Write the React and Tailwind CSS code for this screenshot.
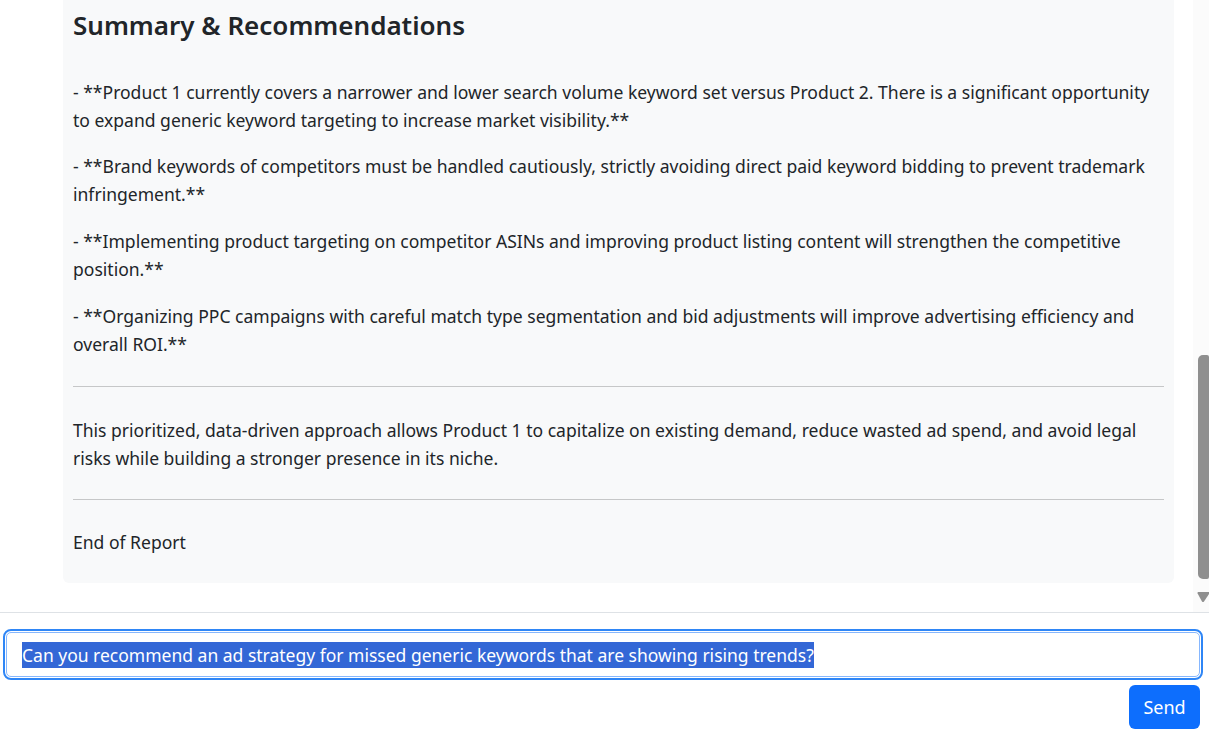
export default function App() {
  const font = { fontFamily: '"Noto Sans", "Open Sans", Arial, sans-serif' };
  return (
    <div className="w-[1209px] h-[738px] flex flex-col bg-white overflow-hidden text-[#212529]" style={font}>
      <div className="flex h-[612px] min-h-0">
        <div className="flex-1 pl-[63px] pr-[19px]">
          <div className="bg-[#f8f9fa] rounded-b-md px-[10px] pb-[27px]">
            <h3 className="text-[26px] font-semibold leading-[34px] pt-[8px] mb-[36px]">Summary &amp; Recommendations</h3>
            <div className="text-[17.55px] leading-[28px] whitespace-nowrap">
              <p className="mb-[18px]">- **Product 1 currently covers a narrower and lower search volume keyword set versus Product 2. There is a significant opportunity<br />to expand generic keyword targeting to increase market visibility.**</p>
              <p className="mb-[19px]">- **Brand keywords of competitors must be handled cautiously, strictly avoiding direct paid keyword bidding to prevent trademark<br />infringement.**</p>
              <p className="mb-[19px]">- **Implementing product targeting on competitor ASINs and improving product listing content will strengthen the competitive<br />position.**</p>
              <p>- **Organizing PPC campaigns with careful match type segmentation and bid adjustments will improve advertising efficiency and<br />overall ROI.**</p>
              <hr className="mt-[28px] mb-[29px] border-0 border-t border-[#c6c7c8]" />
              <p>This prioritized, data-driven approach allows Product 1 to capitalize on existing demand, reduce wasted ad spend, and avoid legal<br />risks while building a stronger presence in its niche.</p>
              <hr className="mt-[27px] mb-[28px] border-0 border-t border-[#c6c7c8]" />
              <p>End of Report</p>
            </div>
          </div>
        </div>
        <div className="w-[16px] bg-[#fbfbfb] flex flex-col items-end pt-[355px]">
          <div className="w-[11px] h-[224px] rounded-l-[5px] rounded-r-[2px] bg-[#8f8f8f]" />
          <div className="mt-[12px]">
            <svg width="12" height="12" viewBox="0 0 12 12">
              <path d="M1 1 H12 V3 L7 10.5 Q6 11.7 5 10.5 L0.6 2.6 Q0.3 1 1 1 Z" fill="#8f8f8f" />
            </svg>
          </div>
        </div>
      </div>
      <div className="border-t border-[#dee2e6] flex-1 flex flex-col px-[6px] pt-[19px]">
        <div className="h-[45px] w-[1194px] rounded-[5px] border border-[#86b7fe] outline-2 outline-offset-1 outline-[#2f86f6] flex items-center pl-[15px] text-[17.5px]">
          <span className="bg-[#3367d6] text-white leading-[26px]">Can you recommend an ad strategy for missed generic keywords that are showing rising trends?</span>
        </div>
        <div className="flex justify-end mt-[8px] pr-[3px]">
          <button className="w-[71px] h-[44px] rounded-[6px] bg-[#0d6efd] text-white text-[18px]">Send</button>
        </div>
      </div>
    </div>
  );
}
